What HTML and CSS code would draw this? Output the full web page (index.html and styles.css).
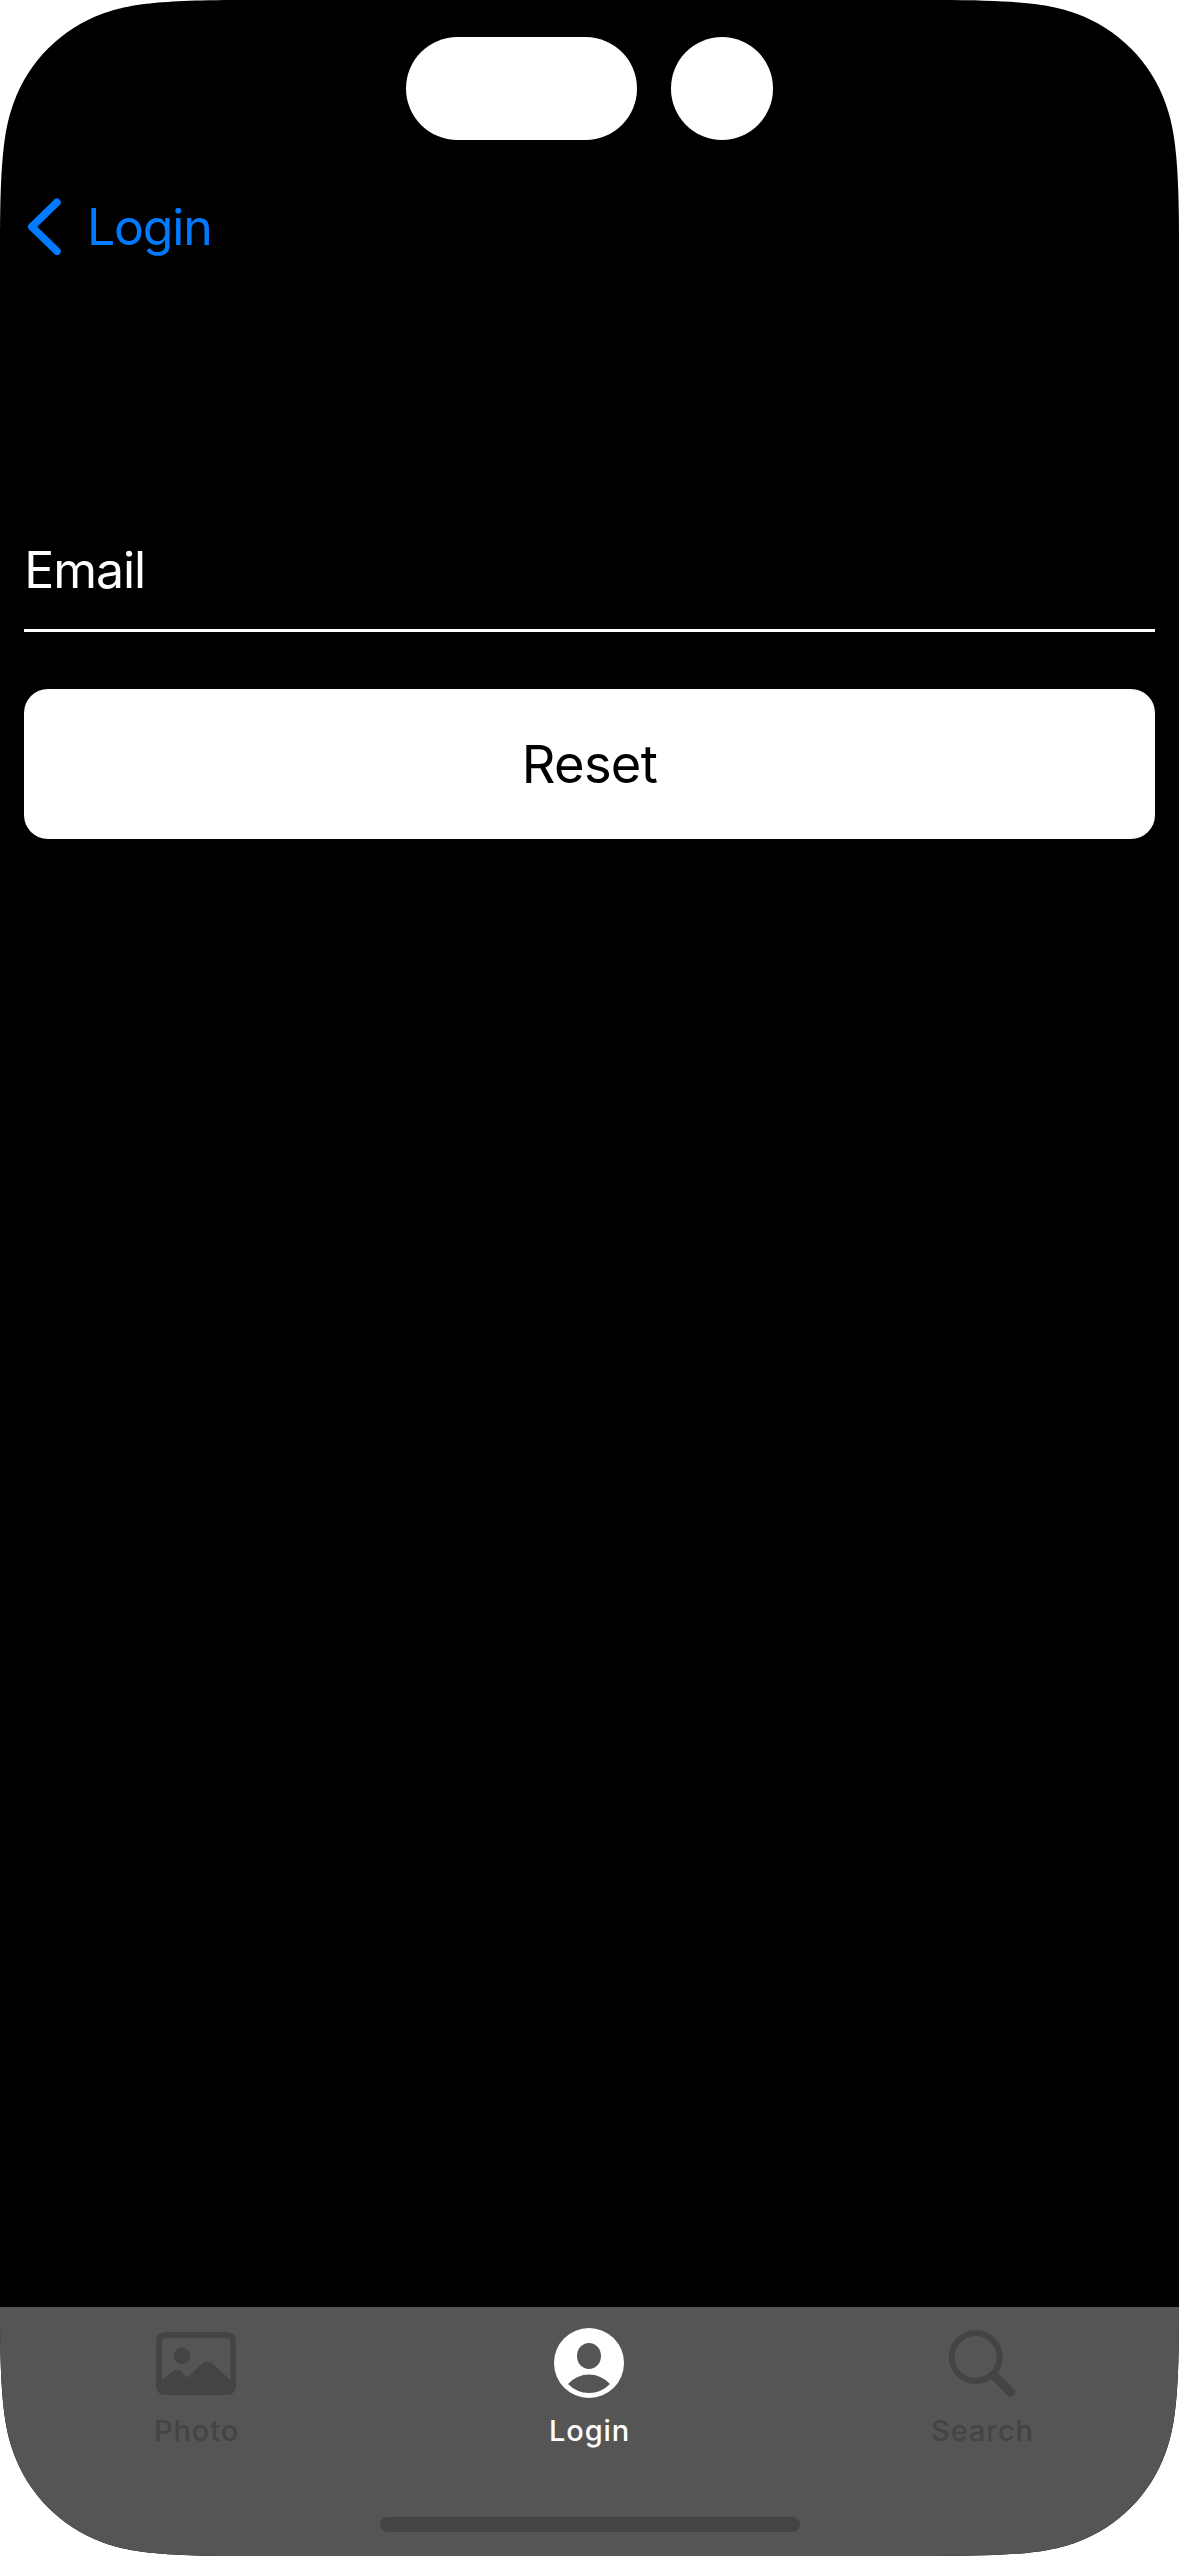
FILE: index.html
```html
<!DOCTYPE html>
<html lang="en">
<head>
<meta charset="utf-8">
<title>Reset password</title>
<link rel="stylesheet" href="styles.css">
</head>
<body>
<div class="screen">
  <header class="status">
    <div class="island"></div>
    <div class="camera"></div>
  </header>
  <nav class="nav">
    <svg class="chevron" width="36" height="60" viewBox="0 0 36 60"><path d="M31 5.300 5.800 29.800 31 54.300"/></svg>
    <span class="back">Login</span>
  </nav>
  <main class="form">
    <div class="field"><span class="email">Email</span></div>
    <div class="button"><span class="reset">Reset</span></div>
  </main>
  <footer class="tabbar">
    <div class="tabs">
      <div class="tab">
        <svg class="icon" width="80" height="80" viewBox="0 0 80 80"><path fill-rule="evenodd" d="M10 9H70Q80 9 80 19V62Q80 72 70 72H10Q0 72 0 62V19Q0 9 10 9ZM10 15Q6 15 6 19V57L16 48.500Q20.500 45 25 48.500L31 54.500L46 41Q51.500 36.500 57 41L74.500 57V19Q74.500 15 70.500 15Z"/><circle cx="26" cy="33" r="8.200"/></svg>
        <span class="label">Photo</span>
      </div>
      <div class="tab active">
        <svg class="icon" width="80" height="80" viewBox="0 0 80 80"><path fill-rule="evenodd" d="M40 5A35 35 0 1 1 40 75A35 35 0 1 1 40 5ZM40 20C33.300 20 28 25.500 28 33S33.300 46 40 46S52 40.500 52 33S46.700 20 40 20ZM19 61Q28 70 40 70T61 61Q52 51.500 40 51.500T19 61Z"/></svg>
        <span class="label">Login</span>
      </div>
      <div class="tab">
        <svg class="icon" width="80" height="80" viewBox="0 0 80 80"><circle class="lens" cx="33.700" cy="34" r="24"/><path class="handle" d="M52 52.300 68.800 69.400"/></svg>
        <span class="label">Search</span>
      </div>
    </div>
    <div class="home"></div>
  </footer>
</div>
</body>
</html>
```

FILE: styles.css
```css
* { box-sizing: border-box; }
body { margin: 0; background: #fff; font-family: Inter, "Liberation Sans", sans-serif; }
.screen {
  width: 1179px;
  height: 2556px;
  display: flex;
  flex-direction: column;
  background: #000;
  /* continuous-curvature device corners */
  clip-path: path("M240 0H939C1029 0 1054 5.800 1076 13.600C1117.500 28.500 1150.500 61.500 1165.400 103C1173.200 125 1179 150 1179 240V2316C1179 2406 1173.200 2431 1165.400 2453C1150.500 2494.500 1117.500 2527.500 1076 2542.400C1054 2550.200 1029 2556 939 2556H240C150 2556 125 2550.200 103 2542.400C61.500 2527.500 28.500 2494.500 13.600 2453C5.800 2431 0 2406 0 2316V240C0 150 5.800 125 13.600 103C28.500 61.500 61.500 28.500 103 13.600C125 5.800 150 0 240 0Z");
}
.status { height: 177px; padding-top: 37px; display: flex; justify-content: center; gap: 34px; }
.island { width: 231px; height: 103px; border-radius: 52px; background: #fff; }
.camera { width: 102.500px; height: 103px; border-radius: 50%; background: #fff; }
.nav { height: 100px; padding-left: 26px; display: flex; align-items: center; gap: 25px; color: #007aff; font-size: 50px; letter-spacing: -1.200px; }
.chevron { fill: none; stroke: #007aff; stroke-width: 7.500px; stroke-linecap: round; stroke-linejoin: round; }
.form { flex: 1; padding: 234px 24px 0; color: #fff; }
.field { height: 121px; padding-left: 0.300px; border-bottom: 3px solid #fff; display: flex; align-items: center; font-size: 50px; letter-spacing: -1.100px; }
.button { height: 150px; margin-top: 57px; border-radius: 24px; background: #fff; color: #000; display: flex; align-items: center; justify-content: center; font-size: 52.400px; letter-spacing: -0.700px; }
.tabbar { height: 249px; padding: 16px 0 24px; background: #555; color: #444; display: flex; flex-direction: column; align-items: center; justify-content: space-between; }
.tabs { width: 100%; display: grid; grid-template-columns: repeat(3, 1fr); }
.tab { display: flex; flex-direction: column; align-items: center; gap: 10px; }
.active { color: #fff; }
.icon { margin-right: 1px; fill: currentColor; }
.lens { fill: none; stroke: currentColor; stroke-width: 6px; }
.handle { fill: none; stroke: currentColor; stroke-width: 8.800px; stroke-linecap: round; }
.label { font-size: 29px; line-height: 36px; font-weight: 500; letter-spacing: 0.900px; }
.home { width: 420px; height: 15px; border-radius: 8px; background: #444; }
```
